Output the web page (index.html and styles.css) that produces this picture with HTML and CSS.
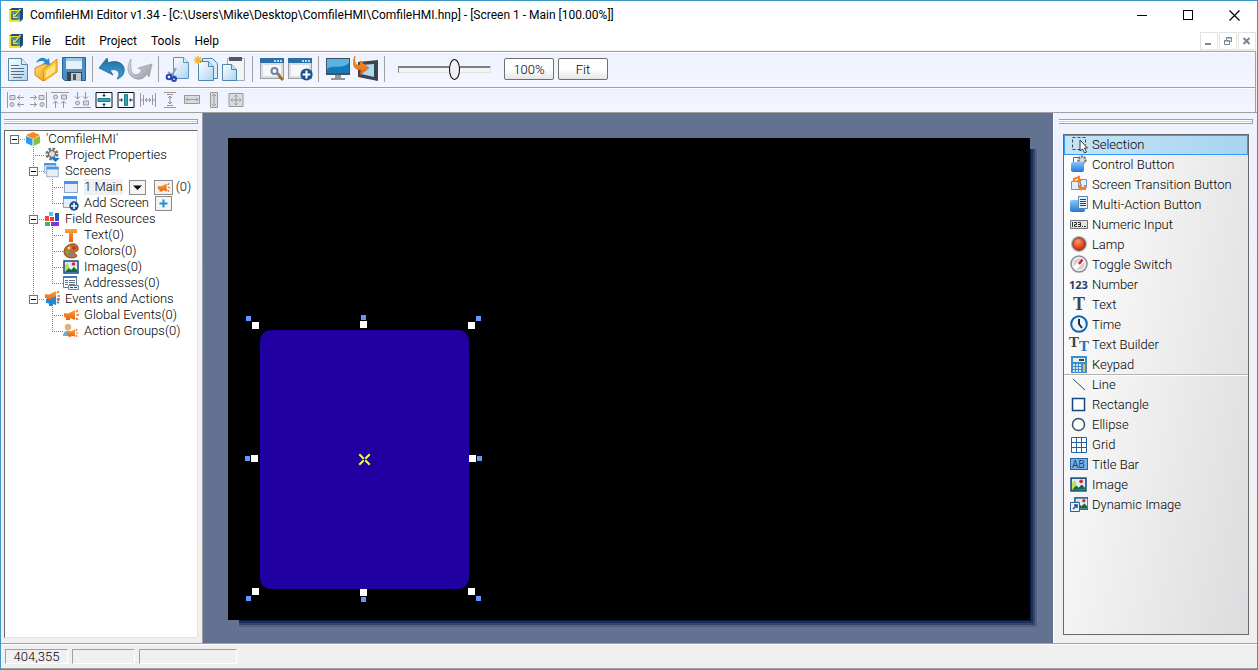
FILE: index.html
```html
<!DOCTYPE html>
<html lang="en">
<head>
    <meta charset="UTF-8">
    <meta name="viewport" content="width=device-width, initial-scale=1.0">
    <title>ComfileHMI Editor</title>
    <link rel="stylesheet" href="styles.css">
</head>
<body>
    <!-- Shared icon shapes -->
    <svg class="defs" width="0" height="0" aria-hidden="true">
        <defs>
            <linearGradient id="paper" x1="0" y1="0" x2="1" y2="1"><stop offset="0" stop-color="#fff"/><stop offset="1" stop-color="#a9d3f2"/></linearGradient>
            <linearGradient id="blue" x1="0" y1="0" x2="0" y2="1"><stop offset="0" stop-color="#8cc4fa"/><stop offset="1" stop-color="#2478d4"/></linearGradient>
            <linearGradient id="orange" x1="0" y1="0" x2="0" y2="1"><stop offset="0" stop-color="#ffa13a"/><stop offset="1" stop-color="#e8600c"/></linearGradient>
            <linearGradient id="silver" x1="0" y1="0" x2="1" y2="1"><stop offset="0" stop-color="#e2e3e6"/><stop offset="1" stop-color="#96989e"/></linearGradient>
            <linearGradient id="arrow" x1="0" y1="0" x2="0" y2="1"><stop offset="0" stop-color="#1d6ea6"/><stop offset="1" stop-color="#3fa0d6"/></linearGradient>
            <linearGradient id="gold" x1="0" y1="0" x2="1" y2="1"><stop offset="0" stop-color="#ffe27a"/><stop offset="1" stop-color="#f0980c"/></linearGradient>
            <radialGradient id="red" cx=".4" cy=".3" r=".7"><stop offset="0" stop-color="#ff9a6a"/><stop offset="1" stop-color="#dc2400"/></radialGradient>
            <symbol id="logo" viewBox="0 0 16 16">
                <path d="M1 3l3-2h11v11l-3 3H1z" fill="#1b4f7a"/>
                <path d="M1 3h11v12H1z" fill="#f2e428"/>
                <rect x="3" y="4" width="9" height="9" rx="1" fill="#3f92b8"/>
                <path d="M12.500 2.500L6 10M5 7v4h4" fill="none" stroke="#1b4f7a" stroke-width="2.500"/>
                <path d="M12.500 2L6.500 9M5.500 7v3.500h4" fill="none" stroke="#f2e428" stroke-width="1.500"/>
            </symbol>
            <symbol id="win" viewBox="0 0 16 16">
                <rect x="1.500" y="2.500" width="13" height="11" fill="#e9edf5" stroke="#8fa6c4"/>
                <rect x="1" y="2" width="14" height="3" fill="#4c93e6"/>
            </symbol>
            <symbol id="plus" viewBox="0 0 10 10">
                <circle cx="5" cy="5" r="4.700" fill="#19538f"/>
                <path d="M5 2v6M2 5h6" stroke="#fff" stroke-width="1.600"/>
            </symbol>
            <symbol id="horn" viewBox="0 0 16 16">
                <path d="M1 6l4 .5L12 3v10L7 11v2H3v-2.500L1 10z" fill="url(#orange)"/>
                <path d="M13 5l2-2M13.500 8H16M13 11l2 2" stroke="#f06a14" stroke-width="1.500"/>
            </symbol>
            <symbol id="photo" viewBox="0 0 16 16">
                <rect x="1" y="2" width="14" height="12" fill="#d6eeff" stroke="#174a7c" stroke-width="1.500"/>
                <path d="M2 13V6l3-2 2 9z" fill="#c6dc4a"/>
                <path d="M2 13l4-4 2 2 3-3 3 3v2z" fill="#146b2e"/>
                <circle cx="10.500" cy="5" r="1.800" fill="#e6252c"/>
            </symbol>
            <symbol id="bigwin" viewBox="0 0 26 26">
                <rect x="1" y="2" width="24" height="21" fill="#9a9da2"/>
                <rect x="2" y="7" width="22" height="15" fill="#dcdde0"/>
                <rect x="4" y="9" width="18" height="11" fill="#f6f7f9"/>
                <rect x="1" y="2" width="24" height="5" fill="#2b6fa8"/>
                <path d="M15 4h2v2h-2zM18 4h2v2h-2zM21 4h2v2h-2z" fill="#b8dbf2"/>
            </symbol>
        </defs>
    </svg>

    <div class="window">
        <header class="titlebar">
            <svg class="logo"><use href="#logo"/></svg>
            <h1>ComfileHMI Editor v1.34 - [C:\Users\Mike\Desktop\ComfileHMI\ComfileHMI.hnp] - [Screen 1 - Main [100.00%]]</h1>
            <div class="window-controls">
                <button aria-label="Minimize"><svg viewBox="0 0 11 11"><path d="M0 5.500h10" stroke="#000"/></svg></button>
                <button aria-label="Maximize"><svg viewBox="0 0 11 11"><rect x=".5" y=".5" width="9" height="9" fill="none" stroke="#000"/></svg></button>
                <button aria-label="Close"><svg viewBox="0 0 11 11"><path d="M.5.5l10 10M10.500.5l-10 10" stroke="#000" stroke-width="1.200"/></svg></button>
            </div>
        </header>

        <nav class="menubar">
            <svg class="logo"><use href="#logo"/></svg>
            <button>File</button>
            <button>Edit</button>
            <button>Project</button>
            <button>Tools</button>
            <button>Help</button>
            <div class="mdi-controls">
                <button aria-label="Minimize document"><svg viewBox="0 0 10 10"><path d="M1 8h6" stroke="#768898" stroke-width="2"/></svg></button>
                <button aria-label="Restore document"><svg viewBox="0 0 10 10"><path d="M3.500 4V1.500h5v4H7M3 2h6M1 5h6" fill="none" stroke="#768898"/><path d="M1.500 4.500h5v4h-5z" fill="none" stroke="#768898"/></svg></button>
                <button aria-label="Close document"><svg viewBox="0 0 10 10"><path d="M1.500 2l6 6M7.500 2l-6 6" stroke="#768898" stroke-width="2"/></svg></button>
            </div>
        </nav>

        <div class="toolbar main-tools">
            <button aria-label="New"><svg viewBox="0 0 26 26"><path d="M3.500 2.500h13l6 6v16h-19z" fill="url(#paper)" stroke="#5b87a8"/><path d="M16.500 2.500v6h6" fill="#d9ecfa" stroke="#5b87a8"/><path d="M6 9.500h8M6 12.500h13M6 15.500h13M6 18.500h13M8 21.500h9" stroke="#5f6d78"/></svg></button>
            <button aria-label="Open"><svg viewBox="0 0 26 26"><path d="M2 12L15 6v13l-5 6-8-6z" fill="url(#gold)" stroke="#d88a10"/><path d="M10 14l14-11v13L11 25z" fill="#ffc530" stroke="#df9010"/><path d="M13 15l9-7v7l-9 7z" fill="#ffe58c"/><path d="M3 7c3-7 9-6 11-3l2-2 1 7-7-1 2-2c-3-2-6-1-9 1z" fill="#1f8ed6"/></svg></button>
            <button aria-label="Save"><svg viewBox="0 0 26 26"><path d="M1.500 1.500h23v23H4l-2.500-2z" fill="#4a90c6" stroke="#2b668f"/><rect x="5" y="2" width="16" height="11" fill="#e7f2fb"/><rect x="5" y="2" width="16" height="3" fill="#9fcbea"/><path d="M6 16h15v9H6z" fill="#3a4450"/><path d="M10 17h10v8H10z" fill="#c7cbd0"/><path d="M12 18h3v6h-3z" fill="#46525e"/></svg></button>
            <span class="sep"></span>
            <button aria-label="Undo"><svg viewBox="0 0 26 26"><path d="M0 12L8 2l1 5c9-4 18 1 16 9-1 4-4 6-7 7 4-5 2-11-7-9l3 5z" fill="url(#arrow)" stroke="#155480" stroke-width=".7"/></svg></button>
            <button aria-label="Redo"><svg viewBox="0 0 26 26"><path d="M4 3C-1 11 0 21 10 23c5 1 8-2 10-5l2 3 3-13-14 4 4 2c-3 6-10 7-11-1-.5-4 0-7 0-10z" fill="url(#silver)" stroke="#9597a0" stroke-width=".7"/></svg></button>
            <span class="sep"></span>
            <button aria-label="Cut"><svg viewBox="0 0 26 26"><path d="M8.500 1.500h10l5 5v16h-15z" fill="url(#paper)" stroke="#5b93bb"/><path d="M18.500 1.500v5h5" fill="#d9ecfa" stroke="#5b93bb"/><path d="M11 12L6 21M3 16l9 6" stroke="#8b9dbb" stroke-width="2"/><circle cx="4" cy="21" r="2.300" fill="none" stroke="#2c45b4" stroke-width="2"/><circle cx="9" cy="23" r="2" fill="none" stroke="#2c45b4" stroke-width="2"/></svg></button>
            <button aria-label="Copy"><svg viewBox="0 0 26 26"><path d="M9.500 2.500h10l5 5v15h-15z" fill="#d6ebfa" stroke="#4b87b0"/><path d="M5.500 5.500h10l5 5v14h-15z" fill="url(#paper)" stroke="#4b87b0"/><path d="M15.500 5.500v5h5" fill="#c4e2f6" stroke="#4b87b0"/><path d="M5 0v8M1 4h8M2 1l6 6M8 1L2 7" stroke="#f7b723" stroke-width="1.500"/></svg></button>
            <button aria-label="Paste"><svg viewBox="0 0 26 26"><path d="M6.500 2.500h17v22h-17z" fill="#f4f4f4" stroke="#a8aaac"/><path d="M8 1h13v4H8z" fill="#54575c"/><path d="M1.500 8.500h9l5 5v11h-14z" fill="url(#paper)" stroke="#4b87b0"/><path d="M10.500 8.500v5h5" fill="#c4e2f6" stroke="#4b87b0"/></svg></button>
            <span class="sep"></span>
            <button aria-label="Screen properties"><svg viewBox="0 0 26 26"><use href="#bigwin"/><circle cx="15.500" cy="15" r="3" fill="none" stroke="#76809c" stroke-width="2"/><path d="M18 17l3 3" stroke="#76809c" stroke-width="3"/><path d="M20 20l4 4" stroke="#b06b17" stroke-width="3"/></svg></button>
            <button aria-label="Add screen"><svg viewBox="0 0 26 26"><use href="#bigwin"/><use href="#plus" x="13" y="12" width="13" height="13"/></svg></button>
            <span class="sep"></span>
            <button aria-label="Simulate"><svg viewBox="0 0 26 26"><path d="M1 2h24v17H1z" fill="#44505a"/><path d="M2 3h22v14H2z" fill="#157bb8"/><path d="M2 3h22v4C16 14 8 8 2 13z" fill="#58b4e0"/><path d="M10 19h6v3h4v2H6v-2h4z" fill="#8e959b"/></svg></button>
            <button aria-label="Download"><svg viewBox="0 0 26 26"><path d="M5 6l20-2v21L5 21z" fill="#3d444b"/><path d="M8 9l13-1v13L8 18z" fill="#a9daf5"/><path d="M2 0c-4 8-1 14 6 14l-1 5 9-7-9-7v4C3 10 1 6 2 0z" fill="url(#orange)" stroke="#d85a08" stroke-width=".5"/></svg></button>
            <span class="sep"></span>
            <input class="zoom" type="range" min="0" max="100" value="62" aria-label="Zoom">
            <button class="push">100%</button>
            <button class="push">Fit</button>
        </div>

        <div class="toolbar align-tools">
            <button disabled aria-label="Align left"><svg viewBox="0 0 18 16"><path d="M.5 0v16M3 3.500h5v4H3zM10 5.500h7M13 3l-2.500 2.500L13 8M10 12.500h7M13 10l-2.500 2.500L13 15"/><circle cx="5" cy="12.500" r="2"/></svg></button>
            <button disabled aria-label="Align right"><svg viewBox="0 0 18 16"><path d="M17.500 0v16M10 3.500h5v4h-5zM1 5.500h7M5 3l2.500 2.500L5 8M1 12.500h7M5 10l2.500 2.500L5 15"/><circle cx="13" cy="12.500" r="2"/></svg></button>
            <button disabled aria-label="Align top"><svg viewBox="0 0 18 16"><path d="M0 .5h18M10.500 3h5v4h-5zM4.500 9v7M2 11.500L4.500 9 7 11.500M12.500 9v7M10 11.500L12.500 9l2.500 2.500"/><circle cx="4.500" cy="5" r="2"/></svg></button>
            <button disabled aria-label="Align bottom"><svg viewBox="0 0 18 16"><path d="M0 15.500h18M10.500 9h5v4h-5zM4.500 0v7M2 4.500L4.500 7 7 4.500M12.500 0v7M10 4.500L12.500 7l2.500-2.500"/><circle cx="4.500" cy="11" r="2"/></svg></button>
            <button aria-label="Center vertically"><svg viewBox="0 0 18 16"><path d="M1 .5h16v15H1z" fill="#f5faff" stroke="#111"/><path d="M3 6.500h12v3H3z" fill="#35a8b4" stroke="#23788c"/><path d="M9 1v4M7.500 3.500h3M9 15v-4M7.500 12.500h3" stroke="#123c74"/></svg></button>
            <button aria-label="Center horizontally"><svg viewBox="0 0 18 16"><path d="M1 .5h16v15H1z" fill="#f5faff" stroke="#111"/><path d="M7.500 2.500h3v11h-3z" fill="#35a8b4" stroke="#23788c"/><path d="M2 8h4M4.500 6.500v3M16 8h-4M13.500 6.500v3" stroke="#123c74"/></svg></button>
            <button disabled aria-label="Space across"><svg viewBox="0 0 18 16"><path d="M1.500 1v14M4.500 3v10M1 8h3M16.500 1v14M13.500 3v10M14 8h3M6 8h6M8 6L6 8l2 2M10 6l2 2-2 2"/></svg></button>
            <button disabled aria-label="Space down"><svg viewBox="0 0 18 16"><path d="M3 .5h12M6 2.500h6M3 15.500h12M6 13.500h6M9 4v8M7 6l2-2 2 2M7 10l2 2 2-2"/></svg></button>
            <button disabled aria-label="Same width"><svg viewBox="0 0 18 16"><path d="M1.500 3.500h15v8h-15zM3 7.500h12M5 5.500l-2 2 2 2M13 5.500l2 2-2 2"/></svg></button>
            <button disabled aria-label="Same height"><svg viewBox="0 0 18 16"><path d="M5.500.5h7v15h-7zM9 2v12M7 4l2-2 2 2M7 12l2 2 2-2"/></svg></button>
            <button disabled aria-label="Same size"><svg viewBox="0 0 18 16"><path d="M2 1.500h14v13H2zM9 3v10M4 8h10M7.500 4.500L9 3l1.500 1.500M7.500 11.500L9 13l1.500-1.500M5.500 6.500L4 8l1.500 1.500M12.500 6.500L14 8l-1.500 1.500"/></svg></button>
        </div>

        <div class="workspace">
            <aside class="panel project">
                <div class="grip"></div>
                <ul class="tree">
                    <li class="root">
                        <div class="row"><span class="branch"><button class="toggle" aria-label="Collapse ComfileHMI"></button></span>
                            <svg viewBox="0 0 16 16"><path d="M8 1l7 3-7 4-7-4z" fill="#ff8a18"/><path d="M1 5l6.500 3v7L1 12z" fill="#2f9be8"/><path d="M15 5L8.500 8v7l6.500-3z" fill="#86c23a"/></svg>
                            <span>'ComfileHMI'</span></div>
                        <ul>
                            <li>
                                <div class="row"><span class="branch"></span>
                                    <svg viewBox="0 0 16 16"><circle cx="8" cy="7" r="5" fill="none" stroke="#777" stroke-width="3" stroke-dasharray="2.500 1.400"/><circle cx="8" cy="7" r="3.500" fill="#ddd" stroke="#555"/><path d="M7 11h9l-4.500 4z" fill="#1472d0"/></svg>
                                    <span>Project Properties</span></div>
                            </li>
                            <li>
                                <div class="row"><span class="branch"><button class="toggle" aria-label="Collapse Screens"></button></span>
                                    <svg viewBox="0 0 16 16"><use href="#win" x="-1" y="-2" width="14" height="14"/><use href="#win" x="1" y="2" width="15" height="14"/></svg>
                                    <span>Screens</span></div>
                                <ul>
                                    <li>
                                        <div class="row"><span class="branch"></span>
                                            <svg><use href="#win"/></svg>
                                            <span class="current">1 Main</span>
                                            <button class="mini" aria-label="Screen options"><svg viewBox="0 0 15 12"><path d="M3 4h9L7.500 8.500z" fill="#111"/></svg></button>
                                            <button class="mini events" aria-label="Screen events"><svg viewBox="0 0 16 16"><use href="#horn"/></svg></button>
                                            <span class="count">(0)</span></div>
                                    </li>
                                    <li>
                                        <div class="row"><span class="branch"></span>
                                            <svg viewBox="0 0 16 16"><use href="#win" x="-1" y="-1" width="16" height="16"/><use href="#plus" x="6" y="6" width="10" height="10"/></svg>
                                            <span>Add Screen</span>
                                            <button class="mini" aria-label="Add screen"><svg viewBox="0 0 15 12"><path d="M7.500 2v8M3.500 6h8" stroke="#1b8fd8" stroke-width="2"/></svg></button></div>
                                    </li>
                                </ul>
                            </li>
                            <li>
                                <div class="row"><span class="branch"><button class="toggle" aria-label="Collapse Field Resources"></button></span>
                                    <svg viewBox="0 0 16 16"><path d="M5 1h4v4H5z" fill="#4cc8f0"/><path d="M1 5h4v5H1z" fill="#f04848"/><path d="M6 6h4v4H6z" fill="#ee3c28"/><path d="M11 2h4v8h-4z" fill="#2456b8"/><path d="M1 11h5v4H1z" fill="#3fb84a"/><path d="M7 11h8v4H7z" fill="#8e2fd8"/></svg>
                                    <span>Field Resources</span></div>
                                <ul>
                                    <li><div class="row"><span class="branch"></span>
                                        <svg viewBox="0 0 16 16"><path d="M2 2h12v4h-4v9H6V6H2z" fill="url(#orange)"/></svg>
                                        <span>Text(0)</span></div></li>
                                    <li><div class="row"><span class="branch"></span>
                                        <svg viewBox="0 0 16 16"><path d="M8 1c5-1 8 2 7 6-1 2-4 1-4 3 0 1 3 1 3 3-2 3-13 3-13-4 0-4 3-7 7-8z" fill="#b87436" stroke="#8a4e1c"/><circle cx="11" cy="5" r="1.800" fill="#e02020"/><circle cx="6" cy="5" r="1.500" fill="#f6df6a"/><circle cx="4.500" cy="9" r="1.500" fill="#5cc050"/><circle cx="8" cy="12" r="1.500" fill="#4a90e0"/></svg>
                                        <span>Colors(0)</span></div></li>
                                    <li><div class="row"><span class="branch"></span>
                                        <svg><use href="#photo"/></svg>
                                        <span>Images(0)</span></div></li>
                                    <li><div class="row"><span class="branch"></span>
                                        <svg viewBox="0 0 16 16"><path d="M.5 1.500h13v11H.5z" fill="#fff" stroke="#5f7fa5"/><path d="M0 1h14v2H0z" fill="#3f78bc"/><path d="M2 5.500h3M6 5.500h6M2 7.500h3M6 7.500h6M2 9.500h3M6 9.500h6" stroke="#63707e"/><path d="M5.500 10.500h10v4h-10z" fill="#eef4fb" stroke="#6888ad"/><path d="M7 12.500h3M11 12.500h3" stroke="#445"/></svg>
                                        <span>Addresses(0)</span></div></li>
                                </ul>
                            </li>
                            <li>
                                <div class="row"><span class="branch"><button class="toggle" aria-label="Collapse Events and Actions"></button></span>
                                    <svg viewBox="0 0 16 16"><use href="#horn" x="0" y="-3" width="16" height="16"/><path d="M2 8l4 .5L12 5v9l-3-1v2H5v-2.500L2 12z" fill="#2587d8"/><path d="M13 11l2 1M13 8h3" stroke="#2587d8" stroke-width="1.500"/></svg>
                                    <span>Events and Actions</span></div>
                                <ul>
                                    <li><div class="row"><span class="branch"></span>
                                        <svg><use href="#horn"/></svg>
                                        <span>Global Events(0)</span></div></li>
                                    <li><div class="row"><span class="branch"></span>
                                        <svg viewBox="0 0 16 16"><circle cx="5" cy="4" r="3.200" fill="#e6b078"/><path d="M0 13c0-7 10-7 10 0z" fill="#6ea9dc"/><use href="#horn" x="2" y="4" width="14" height="12"/></svg>
                                        <span>Action Groups(0)</span></div></li>
                                </ul>
                            </li>
                        </ul>
                    </li>
                </ul>
            </aside>

            <main class="canvas">
                <div class="screen">
                    <svg viewBox="0 0 802 482" role="img" aria-label="Screen 1 with a selected rectangle">
                        <rect x="32" y="192" width="209" height="259" rx="11" fill="#2000a0"/>
                        <path d="M132 317l3 3M141 317l-3 3M132 326l3-3M141 326l-3-3" stroke="#eeff50" stroke-width="2" stroke-linecap="square"/>
                        <!-- resize handles -->
                        <g fill="#fff">
                            <rect x="24" y="184" width="7" height="7"/><rect x="132" y="183" width="7" height="7"/><rect x="240" y="184" width="7" height="7"/>
                            <rect x="23" y="317" width="7" height="7"/><rect x="241" y="317" width="7" height="7"/>
                            <rect x="24" y="450" width="7" height="7"/><rect x="132" y="451" width="7" height="7"/><rect x="240" y="450" width="7" height="7"/>
                        </g>
                        <!-- outer handles -->
                        <g fill="#6496ff">
                            <rect x="18" y="178" width="5" height="5"/><rect x="133" y="177" width="5" height="5"/><rect x="248" y="178" width="5" height="5"/>
                            <rect x="17" y="318" width="5" height="5"/><rect x="249" y="318" width="5" height="5"/>
                            <rect x="18" y="458" width="5" height="5"/><rect x="133" y="459" width="5" height="5"/><rect x="248" y="458" width="5" height="5"/>
                        </g>
                    </svg>
                </div>
            </main>

            <aside class="panel toolbox">
                <div class="grip"></div>
                <div class="palette">
                    <div class="group">
                        <button class="selected" aria-pressed="true"><svg viewBox="0 0 18 18"><path d="M2.500 2.500h13v12h-13z" fill="none" stroke="#445" stroke-dasharray="3 2"/><path d="M10 5v11l2.500-2 2 4 2-1-2-4h3z" fill="#fff" stroke="#333"/></svg>Selection</button>
                        <button><svg viewBox="0 0 18 18"><path d="M3.500 7V2.500H8" fill="none" stroke="#e03020"/><circle cx="12" cy="5" r="3.500" fill="#ddd" stroke="#777" stroke-width="2.500" stroke-dasharray="2 1"/><rect x="1" y="7" width="13" height="10" rx="2" fill="url(#blue)"/></svg>Control Button</button>
                        <button><svg viewBox="0 0 18 18"><path d="M1.500 6.500h9v8h-9zM8.500 4.500h8v8h-8z" fill="#e4effb" stroke="#6d94c2"/><path d="M4 7V4l5-2v4M9 10l2 4h4v-4" fill="none" stroke="#f58220" stroke-width="2"/><path d="M6 5h6L9 9zM8 13l4-4v7z" fill="#f58220"/></svg>Screen Transition Button</button>
                        <button><svg viewBox="0 0 18 18"><rect x="0" y="5" width="15" height="12" rx="2" fill="url(#blue)"/><path d="M8.500 1.500h9v12h-9z" fill="#e8f1fb" stroke="#5683b8"/><path d="M10 4.500h6M10 6.500h6M10 8.500h6M10 10.500h6" stroke="#345"/></svg>Multi-Action Button</button>
                        <button><svg viewBox="0 0 18 18"><rect x="0" y="5" width="18" height="9" rx="1" fill="#707478"/><rect x="1" y="6" width="16" height="7" fill="#e3e5e7"/><path d="M2.500 7v5M4 7.500h2.500v2H4.500v2H7M8 7.500h2.500v4H8M8 9.500h2M12 11.500h1M14 11.500h2" fill="none" stroke="#333"/></svg>Numeric Input</button>
                        <button><svg viewBox="0 0 18 18"><circle cx="9" cy="9" r="8" fill="#b5b5b8"/><circle cx="9" cy="9" r="6.200" fill="url(#red)" stroke="#7a2d1a"/></svg>Lamp</button>
                        <button><svg viewBox="0 0 18 18"><circle cx="9" cy="9" r="8" fill="#ececee" stroke="#8c8c90" stroke-width="1.500"/><circle cx="9" cy="9" r="5.500" fill="#d0d0d4"/><path d="M5 13l8-8" stroke="#fff" stroke-width="4"/><path d="M9 9l3.500-4.500" stroke="#d8201a" stroke-width="2.500"/></svg>Toggle Switch</button>
                        <button><svg viewBox="0 0 18 18" class="digits"><text x="-1" y="14">123</text></svg>Number</button>
                        <button><svg viewBox="0 0 18 18" class="serif"><text x="3" y="15" fill="#444">T</text></svg>Text</button>
                        <button><svg viewBox="0 0 18 18"><circle cx="9" cy="9" r="7.800" fill="#eef5fc" stroke="#1464ac" stroke-width="2"/><path d="M9 4v5l3 4" fill="none" stroke="#1d2c44" stroke-width="2"/></svg>Time</button>
                        <button><svg viewBox="0 0 18 18" class="serif pair"><text x="-1" y="12" fill="#444">T</text><text x="9" y="16" fill="#2170c0">T</text></svg>Text Builder</button>
                        <button><svg viewBox="0 0 18 18"><rect x="1" y="1" width="16" height="17" fill="#3f8dd0"/><path d="M3 3h12v4H3z" fill="#e4f1dd"/><path d="M9 5h5" stroke="#345" stroke-width="2"/><path d="M3 9h2v2H3zM6 9h2v2H6zM9 9h2v2H9zM3 12h2v2H3zM6 12h2v2H6zM9 12h2v2H9zM3 15h2v2H3zM6 15h2v2H6zM9 15h2v2H9z" fill="#d5e8fa"/><path d="M13 9h2v8h-2z" fill="#efb949"/></svg>Keypad</button>
                    </div>
                    <div class="group">
                        <button><svg viewBox="0 0 18 18"><path d="M3 4l12 11" stroke="#34506c"/></svg>Line</button>
                        <button><svg viewBox="0 0 18 18"><rect x="2.500" y="3.500" width="12" height="12" fill="#fff" stroke="#174580" stroke-width="1.500"/></svg>Rectangle</button>
                        <button><svg viewBox="0 0 18 18"><circle cx="8.500" cy="9.500" r="6" fill="#fff" stroke="#35506e" stroke-width="1.500"/></svg>Ellipse</button>
                        <button><svg viewBox="0 0 18 18"><path d="M1.500 2.500h15v15h-15zM6.500 2v15M11.500 2v15M1 7.500h15M1 12.500h15" fill="#fff" stroke="#2460a4"/></svg>Grid</button>
                        <button><svg viewBox="0 0 18 18" class="ab"><rect x=".5" y="3.500" width="17" height="11" fill="#78b0e8" stroke="#2c609c"/><text x="2" y="13">AB</text></svg>Title Bar</button>
                        <button><svg viewBox="0 0 18 18"><use href="#photo" x="0" y="1" width="17" height="17"/></svg>Image</button>
                        <button><svg viewBox="0 0 18 18"><use href="#photo" x="4" y="1" width="15" height="15"/><path d="M.5 7.500h9v9h-9z" fill="#e9f3fd" stroke="#2d5f9c"/><path d="M3 14l4-4M4 10h3v3" fill="none" stroke="#1b4f94" stroke-width="1.500"/></svg>Dynamic Image</button>
                    </div>
                </div>
            </aside>
        </div>

        <footer class="statusbar">
            <span class="cell">404,355</span>
            <span class="cell"></span>
            <span class="cell wide"></span>
        </footer>
    </div>
</body>
</html>
```

FILE: styles.css
```css
* {
    margin: 0;
    padding: 0;
    box-sizing: border-box;
}
body {
    font-family: Roboto, 'Liberation Sans', sans-serif;
    font-size: 13px;
    font-weight: 300;
    color: #000;
    background: #f0f0f0;
}
button {
    font: inherit;
    color: inherit;
    background: none;
    border: none;
}
svg {
    display: block;
    flex: none;
}
ul {
    list-style: none;
}
.defs {
    position: absolute;
}
.window {
    display: flex;
    flex-direction: column;
    min-height: 100vh;
    border: 1px solid #3c96c8;
}

/* Title and menu */
.titlebar,
.menubar {
    display: flex;
    align-items: center;
    background: #fff;
    padding-left: 7px;
    font-size: 12px;
    font-weight: 400;
}
.titlebar {
    height: 28px;
}
.titlebar h1 {
    font-size: 12px;
    font-weight: 400;
    margin-left: 6px;
    white-space: nowrap;
}
.logo {
    width: 16px;
    height: 16px;
}
.window-controls {
    display: flex;
    margin-left: auto;
}
.window-controls button {
    width: 46px;
    height: 28px;
    display: flex;
    align-items: center;
    justify-content: center;
}
.window-controls svg {
    width: 11px;
    height: 11px;
}
.menubar {
    height: 22px;
    padding-top: 2px;
    border-bottom: 1px solid #f0f0f0;
}
.menubar > button {
    padding: 0 7px;
}
.menubar > .logo {
    margin-right: 1px;
}
.mdi-controls {
    display: flex;
    gap: 1px;
    margin-left: auto;
    margin-right: 1px;
}
.mdi-controls button {
    width: 18px;
    height: 18px;
    border: 1px solid #e2e2e2;
    display: flex;
    align-items: center;
    justify-content: center;
}
.mdi-controls svg {
    width: 10px;
    height: 10px;
}

/* Toolbars */
.toolbar {
    display: flex;
    align-items: center;
    border-top: 1px solid #a0a0a0;
    border-right: 1px solid #a0a0a0;
    margin-right: 1px;
    background: linear-gradient(#edf1ff, #f5f7ff);
    box-shadow: inset 0 1px #fff;
}
.main-tools {
    height: 36px;
    padding: 0 0 1px 3px;
}
.main-tools button {
    width: 28px;
    height: 28px;
    padding: 1px;
}
.main-tools svg {
    width: 26px;
    height: 26px;
}
.sep {
    width: 10px;
    height: 26px;
    border-left: 4px solid transparent;
    background: linear-gradient(#a0a0a0, #a0a0a0) no-repeat 0 0 / 1px 100%;
}
.main-tools .push {
    width: 50px;
    height: 22px;
    margin-right: 4px;
    border: 1px solid #707070;
    border-radius: 2px;
    background: linear-gradient(#fff 50%, #e6e6e6);
    font-size: 13px;
}
.zoom {
    appearance: none;
    width: 93px;
    height: 22px;
    margin: 0 13px 0 8px;
    background: none;
}
.zoom::-webkit-slider-runnable-track {
    height: 7px;
    border: 1px solid;
    border-color: #808080 #e3e3e3 #e3e3e3 #808080;
    box-shadow: inset 0 1px #808080;
    background: #f4f4f4;
}
.zoom::-webkit-slider-thumb {
    appearance: none;
    width: 11px;
    height: 21px;
    margin-top: -8px;
    border: 1px solid #000;
    border-radius: 50%;
    background: #f0f0f0;
}
.align-tools {
    height: 25px;
    padding-left: 4px;
}
.align-tools button {
    width: 22px;
    padding: 0 2px;
}
.align-tools svg {
    width: 18px;
    height: 16px;
    fill: #dcdce0;
    stroke: #989898;
}

/* Workspace */
.workspace {
    flex: 1;
    display: flex;
    border-top: 1px solid #a0a0a0;
    border-bottom: 1px solid #a0a0a0;
}
.panel {
    display: flex;
    flex-direction: column;
    background: linear-gradient(#eef2ff, #f0f0f0 90%);
}
.project {
    width: 202px;
    padding: 6px 4px 5px 3px;
    border-right: 1px solid #a0a0a0;
}
.toolbox {
    width: 204px;
    padding: 6px 4px 8px 5px;
    border-left: 1px solid #fff;
}
.grip {
    height: 5px;
    border: solid #a0a0a0;
    border-width: 1px 1px 1px 0;
    background: #fff;
}
.grip::after {
    content: '';
    display: block;
    border-bottom: 1px solid #d0d3de;
    padding-top: 1px;
}
.tree {
    flex: 1;
    margin-top: 6px;
    padding-left: 5px;
    background: #fff;
    border: 1px solid;
    border-color: #696969 #e3e3e3 #e3e3e3 #696969;
}
.tree ul {
    margin-left: 19px;
}
/* dotted trunk, cut short on the last branch */
.tree li li {
    background: repeating-linear-gradient(#808080 0 1px, transparent 1px 2px) no-repeat 4px 0 / 1px 100%;
}
.tree li li:last-child {
    background-size: 1px 8px;
}
.row {
    display: flex;
    align-items: center;
    height: 16px;
    line-height: 16px;
    white-space: nowrap;
}
.row > svg {
    width: 16px;
    height: 16px;
    margin-right: 5px;
}
.branch {
    width: 15px;
    height: 16px;
    padding-top: 4px;
    background: repeating-linear-gradient(90deg, #808080 0 1px, transparent 1px 2px) no-repeat 4px 8px / 11px 1px;
}
.toggle {
    display: block;
    width: 9px;
    height: 9px;
    border: 1px solid #707070;
    background: linear-gradient(#000, #000) no-repeat center / 5px 1px #fff;
}
.current {
    background: #f0f0f0;
}
.mini {
    width: 17px;
    height: 15px;
    margin-left: 6px;
    border: 1px solid #8a8a8a;
    background: #f4f4f4;
}
.mini svg {
    width: 15px;
    height: 13px;
}
.events {
    width: 19px;
    margin-left: 8px;
}
.events svg {
    width: 17px;
}
.count {
    margin-left: 3px;
}
.canvas {
    flex: 1;
    min-width: 0;
    padding: 25px 25px 20px;
    background: #647292;
}
.screen {
    width: 802px;
    height: 482px;
    background: #000;
    box-shadow: 6px 6px 0 -5px #0a1b40, 7px 7px 0 -4px #1d2d55, 8px 8px 0 -3px #36456b, 9px 9px 0 -2px #526083;
}
.palette {
    flex: 1;
    margin: 10px 4px 0 4px;
    border: 1px solid #696969;
    background: linear-gradient(100deg, #fff, #dcdcde);
}
.palette button {
    display: flex;
    align-items: center;
    width: 100%;
    height: 20px;
    padding: 0 0 2px 5px;
    border: 1px solid transparent;
    text-align: left;
    white-space: nowrap;
}
.palette svg {
    width: 18px;
    height: 18px;
    margin-right: 4px;
}
.palette .selected {
    border-color: #3399ff;
    background: linear-gradient(90deg, #c4e4f8, #a8d4f0);
}
.group + .group {
    box-shadow: 0 -1px #b4b4b4, inset 0 1px #fff;
}
.digits text {
    font: bold 11px 'Open Sans', sans-serif;
    fill: #26406e;
}
.digits,
.serif {
    overflow: visible;
}
.serif text {
    font: bold 18px 'Liberation Serif', serif;
}
.pair text {
    font-size: 15px;
}
.ab text {
    font: 10px 'Open Sans', sans-serif;
    fill: #123c74;
}

/* Status bar */
.statusbar {
    display: flex;
    align-items: center;
    gap: 4px;
    height: 25px;
    padding-left: 4px;
    border-top: 1px solid #fff;
    border-bottom: 1px solid #a0a0a0;
}
.cell {
    width: 63px;
    height: 15px;
    border: 1px solid;
    border-color: #a0a0a0 #fff #fff #a0a0a0;
    line-height: 13px;
    text-align: center;
}
.wide {
    width: 98px;
}
```
